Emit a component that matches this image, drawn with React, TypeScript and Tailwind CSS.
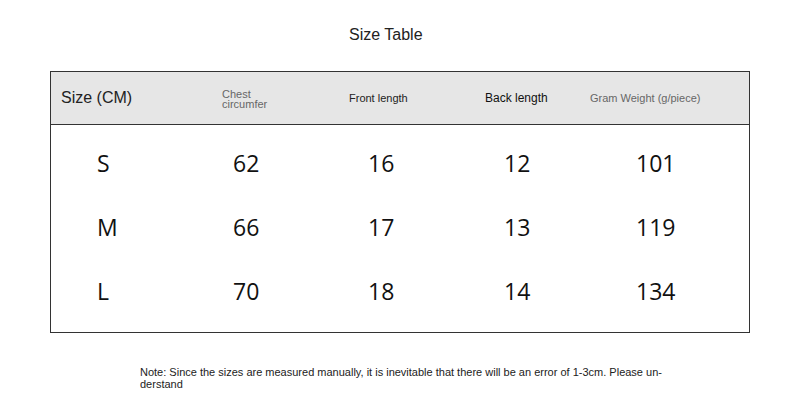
import React from "react";

const rows = [
  { size: "S", chest: 62, front: 16, back: 12, weight: 101 },
  { size: "M", chest: 66, front: 17, back: 13, weight: 119 },
  { size: "L", chest: 70, front: 18, back: 14, weight: 134 },
];

export default function App() {
  return (
    <div className="w-[800px] h-[417px] bg-white font-['Liberation_Sans',Arial,sans-serif] text-[#222]">
      <div className="h-[71px] pt-[25px] pl-[349px] text-[16px] leading-[20px]">
        Size Table
      </div>

      <div className="mx-[50px] border border-[#333]">
        <div className="h-[53px] bg-[#e6e6e6] border-b border-[#333] grid grid-cols-[165px_127px_136px_105px_1fr] items-center">
          <div className="pl-[10px] text-[16px] text-[#222]">Size (CM)</div>
          <div className="pl-[6px] text-[11px] leading-[10px] text-[#666] mt-[1px]">
            Chest
            <br />
            circumfer
          </div>
          <div className="pl-[6px] text-[11px] text-[#222]">Front length</div>
          <div className="pl-[6px] text-[12px] text-[#111]">Back length</div>
          <div className="pl-[6px] text-[11px] text-[#666]">Gram Weight (g/piece)</div>
        </div>

        <div className="h-[207px] pt-[6px] font-['Open_Sans','Noto_Sans',sans-serif] text-[23px] text-[#111]">
          {rows.map((r) => (
            <div
              key={r.size}
              className="h-[64px] grid grid-cols-[165px_127px_136px_105px_1fr] items-center"
            >
              <div className="pl-[46px]">{r.size}</div>
              <div className="pl-[17px]">{r.chest}</div>
              <div className="pl-[25px]">{r.front}</div>
              <div className="pl-[25px]">{r.back}</div>
              <div className="pl-[52px]">{r.weight}</div>
            </div>
          ))}
        </div>
      </div>

      <div className="mt-[33px] pl-[140px] text-[11px] leading-[12px] text-[#222]">
        Note: Since the sizes are measured manually, it is inevitable that there will be an error of 1-3cm. Please un-
        <br />
        derstand
      </div>
    </div>
  );
}
